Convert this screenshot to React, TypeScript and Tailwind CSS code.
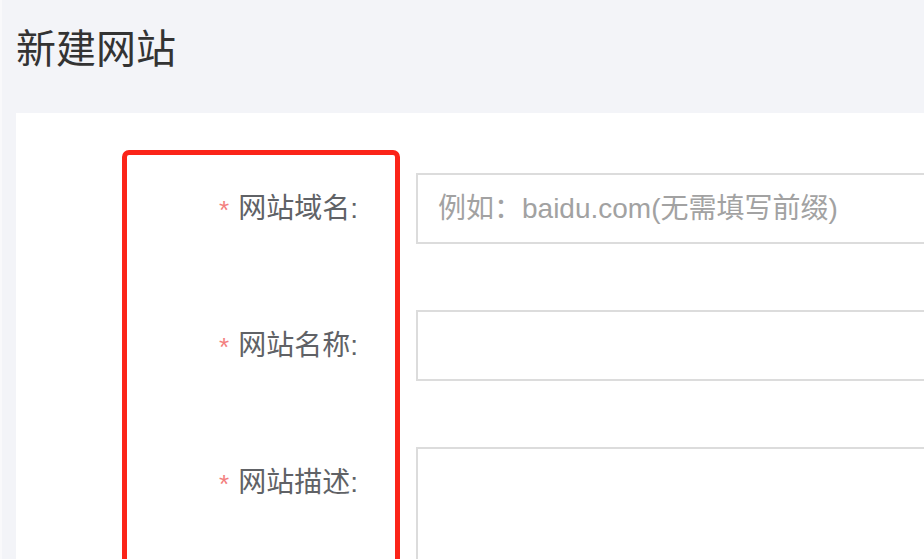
import React from "react";

const font = {
  fontFamily: '"Liberation Sans", "Noto Sans CJK SC", sans-serif',
};

function Label({ text }: { text: string }) {
  return (
    <div className="w-[400px] h-[71px] shrink-0 flex items-center justify-end pr-[58px] text-[28px] text-[#606266] leading-none">
      <span className="text-[#f37f7f] mr-[9px] text-[26px] relative top-[1px]">*</span>
      <span>{text}:</span>
    </div>
  );
}

export default function App() {
  return (
    <div
      className="w-[924px] h-[559px] overflow-hidden bg-[#f3f4f8] border-l-2 border-[#f9f9fb] flex flex-col"
      style={font}
    >
      <div className="h-[113px] shrink-0 pl-[14px] pt-[29px]">
        <h1 className="text-[40px] leading-[40px] text-[#333333] font-normal">新建网站</h1>
      </div>
      <div className="relative flex-1 ml-[14px] bg-white pt-[60px] flex flex-col gap-[66px]">
        <div className="flex items-start">
          <Label text="网站域名" />
          <div className="w-[560px] h-[71px] shrink-0 border-2 border-[#dcdcdc] flex items-center pl-[20px] text-[28px] text-[#a2a2a2] whitespace-nowrap">
            例如：baidu.com(无需填写前缀)
          </div>
        </div>
        <div className="flex items-start">
          <Label text="网站名称" />
          <div className="w-[560px] h-[71px] shrink-0 border-2 border-[#dcdcdc]" />
        </div>
        <div className="flex items-start">
          <Label text="网站描述" />
          <div className="w-[560px] h-[160px] shrink-0 border-2 border-[#dcdcdc]" />
        </div>
        <div className="absolute left-[106px] top-[37px] w-[278px] h-[500px] border-[5px] border-[#fb2419] rounded-[7px] pointer-events-none" />
      </div>
    </div>
  );
}
